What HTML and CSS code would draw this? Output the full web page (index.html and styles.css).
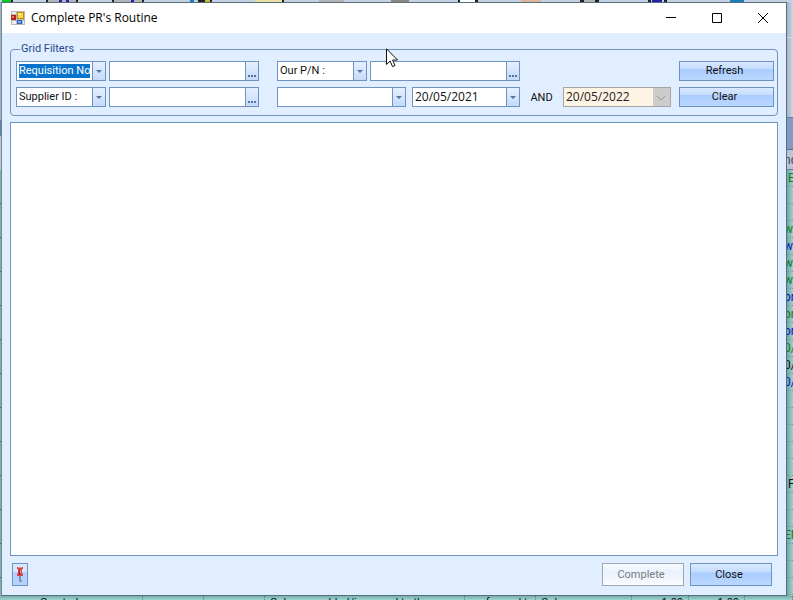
FILE: index.html
```html
<!DOCTYPE html>
<html lang="en">
<head>
<meta charset="utf-8">
<title>Complete PR's Routine</title>
<link rel="stylesheet" href="styles.css">
</head>
<body>
<div class="desktop">
  <div class="strip-top" aria-hidden="true">
    <svg width="793" height="2" viewBox="0 0 793 2"><path fill="#0c2" d="M2 0h9v2H2z"/><path fill="#222" d="M11 0h2v2h-2zM46 0h2v2h-2zM76 0h2v2h-2zM112 0h2v2h-2zM142 0h2v2h-2zM198 0h14v2h-14zM282 0h2v2h-2zM458 0h2v2h-2zM475 0h3v2h-3zM580 0h4v2h-4zM595 0h4v2h-4zM648 0h3v2h-3zM664 0h3v2h-3z"/><path fill="#b4b4b4" d="M48 0h28v2H48zM114 0h28v2h-28zM319 0h25v2h-25zM584 0h11v2h-11z"/><path fill="#fff" d="M460 0h15v2h-15z"/><path fill="#22a" d="M59 0h3v2h-3zM66 0h3v2h-3zM131 0h3v2h-3zM652 0h10v2h-10z"/><path fill="#1780bb" d="M190 0h4v2h-4zM730 0h14v2h-14z"/><path fill="#c9b93b" d="M205 0h5v2h-5z"/><path fill="#e8e0a0" d="M255 0h27v2h-27z"/><path fill="#888" d="M391 0h18v2h-18z"/><path fill="#d9b69c" d="M521 0h20v2h-20z"/></svg>
  </div>
  <div class="strip-left" aria-hidden="true"><div class="left-bars"></div><div class="left-rows"></div></div>
  <main class="window">
    <header class="titlebar">
      <svg class="app-icon" width="14" height="14" viewBox="0 0 14 14"><path fill="#b9b9b9" d="M0 0h14v14H0z"/><path fill="#eee" d="M1 1h4v2H1zM1 10h4v3H1zM12 10h1v3h-1z"/><path fill="#b3261b" d="M0 4h5v5H0z"/><path fill="#ef7a68" d="M1 5h2v2H1z"/><path fill="#c78a00" d="M6 1h7v7H6z"/><path fill="#ffd84d" d="M7 2h5v5H7z"/><path fill="#fff0a0" d="M7 2h3v2H7z"/><path fill="#2f63bd" d="M6 9h5v4H6z"/><path fill="#82a9ee" d="M7 10h3v2H7z"/></svg>
      <h1>Complete PR's Routine</h1>
      <div class="caption-buttons">
        <button type="button" aria-label="Minimize"><svg width="12" height="12"><path d="M1 5.500h10"/></svg></button>
        <button type="button" aria-label="Maximize"><svg width="12" height="12"><path d="M1.500 1.500h9v9h-9z"/></svg></button>
        <button type="button" aria-label="Close window"><svg width="12" height="12"><path d="M1 1l10 10M11 1L1 11"/></svg></button>
      </div>
    </header>
    <fieldset class="filters">
      <legend>Grid Filters</legend>
      <div class="filter-line">
        <div class="combo type"><select aria-label="First filter" class="selected"><option>Requisition No</option></select></div>
        <div class="lookup"><input type="text" aria-label="Requisition value"><button type="button" aria-label="Find requisition"><i></i><i></i><i></i></button></div>
        <div class="combo type second"><select aria-label="Second filter"><option>Our P/N :</option></select></div>
        <div class="lookup"><input type="text" aria-label="Part number value"><button type="button" aria-label="Find part"><i></i><i></i><i></i></button></div>
        <button type="button" class="button action">Refresh</button>
      </div>
      <div class="filter-line">
        <div class="combo type"><select aria-label="Third filter"><option>Supplier ID :</option></select></div>
        <div class="lookup"><input type="text" aria-label="Supplier value"><button type="button" aria-label="Find supplier"><i></i><i></i><i></i></button></div>
        <div class="combo field second"><select aria-label="Date field"><option></option></select></div>
        <div class="combo date"><select aria-label="From date"><option>20/05/2021</option></select></div>
        <span class="and">AND</span>
        <div class="combo date off"><select aria-label="To date" disabled><option>20/05/2022</option></select><svg width="10" height="6"><path d="M1 1l4 4 4-4"/></svg></div>
        <button type="button" class="button action">Clear</button>
      </div>
    </fieldset>
    <section class="results" aria-label="Results"></section>
    <footer class="footer">
      <button type="button" class="pin" aria-label="Pin window"><svg width="8" height="16" viewBox="0 0 8 16"><path fill="#8291a5" d="M3 9h2v5H3z"/><path fill="#8b98b1" d="M3 13h3v2H3z"/><path fill="#d94747" d="M1 0h6v2H6v4l1 1v2H1V7l1-1V2H1z"/><path fill="#f19090" d="M2 0h4v1H2zM4 3h1v3H4z"/><path fill="#9f2029" d="M3 3h1v5H3z"/></svg></button>
      <button type="button" class="button" disabled>Complete</button>
      <button type="button" class="button">Close</button>
    </footer>
  </main>
  <div class="strip-right" aria-hidden="true">
    <div class="r-tool"></div><div class="r-space"></div><div class="r-band"></div><div class="r-head">nc</div>
    <div class="r-row green full">E</div><div class="r-row"></div><div class="r-row"></div>
    <div class="r-row green">w</div><div class="r-row blue">w</div><div class="r-row green">w</div><div class="r-row green">w</div>
    <div class="r-row blue">or</div><div class="r-row green">or</div><div class="r-row blue">or</div>
    <div class="r-row green">0/</div><div class="r-row">0/</div><div class="r-row blue">0/</div>
    <div class="r-row"></div><div class="r-row"></div><div class="r-row"></div><div class="r-row"></div><div class="r-row"></div>
    <div class="r-row full">F</div><div class="r-row"></div><div class="r-row"></div><div class="r-row green">ER</div>
    <div class="r-row"></div><div class="r-row"></div><div class="r-row"></div>
  </div>
  <div class="strip-bottom" aria-hidden="true">
    <span>Created</span><span></span><span></span><span>Column enabled/is moved to the e</span><span>performed to</span><span>Column</span><span class="num">1.00</span><span class="num">1.00</span><span></span>
  </div>
  <svg class="cursor" width="12" height="20" viewBox="0 0 12 20" aria-hidden="true"><path fill="#fff" stroke="#111" d="M.5.800v15.700l3.600-3.500 2.400 5.600 2.500-1.100-2.400-5.500h4.900z"/></svg>
</div>
</body>
</html>
```
FILE: styles.css
```css
* { box-sizing: border-box; }
body {
  margin: 0;
  overflow: hidden;
  color: #111;
  font: 11px/14px Roboto, "Liberation Sans", sans-serif;
}
button, input, select { font: inherit; color: inherit; margin: 0; border-radius: 0; }
.desktop {
  position: relative;
  display: grid;
  grid-template: 2px minmax(0, 1fr) 4px / 1px minmax(0, 1fr) 6px;
  height: 100vh;
  background: #9ad6d3;
}
.strip-top { grid-column: 1 / -1; overflow: hidden; background: #c3d1e3; }
.strip-top svg { display: block; }
.strip-left { display: flex; flex-direction: column; overflow: hidden; }
.left-bars { height: 168px; background: linear-gradient(#9fb0c8 0 70%, #667fae 70% 80%, #c0c8d8 80%); }
.left-rows { flex: 1; background: repeating-linear-gradient(#7fb0ae 0 33px, #486d6e 33px 34px); }
.window {
  display: flex;
  flex-direction: column;
  min-width: 0;
  border: 1px solid #56707e;
  border-left-color: #6b8a93;
  background: #e1eeff;
}
.titlebar { display: flex; flex: none; align-items: center; height: 30px; padding-left: 9px; background: #fff; }
.titlebar h1 { flex: 1; margin: 0 0 0 6px; color: #000; font: 12px/16px "Open Sans", "Noto Sans", sans-serif; }
.caption-buttons { display: flex; }
.caption-buttons button { width: 46px; height: 30px; padding: 0; border: 0; background: none; }
.caption-buttons svg { display: block; margin: auto; fill: none; stroke: #000; }
.filters {
  display: flex;
  flex-direction: column;
  gap: 6px;
  min-width: 0;
  margin: 9px 8px 0;
  padding: 5px 3px 8px 5px;
  border: 1px solid #6f93c1;
  border-radius: 4px;
}
.filters legend { margin-left: 4px; padding: 0 6px 0 1px; color: #24498c; line-height: 14px; }
.filter-line { display: flex; height: 20px; }
.combo { position: relative; flex: none; border: 1px solid #6f93c1; background: #fff; }
.combo select {
  appearance: none;
  display: block;
  width: 100%;
  height: 100%;
  padding: 0 14px 0 2px;
  border: 0;
  outline: 0;
  color: #111;
  background: conic-gradient(#6f93c1 0 0) right 12px top / 1px 100% no-repeat, linear-gradient(#e6f0ff, #c5dafa) right / 12px 100% no-repeat;
}
.combo::after {
  content: "";
  position: absolute;
  right: 3px;
  top: 8px;
  border: 3px solid transparent;
  border-top-color: #54749f;
  border-bottom: 0;
}
.combo .selected {
  color: #fff;
  background: conic-gradient(#6f93c1 0 0) right 12px top / 1px 100% no-repeat, linear-gradient(#e6f0ff, #c5dafa) right / 12px 100% no-repeat, conic-gradient(#0874ce 0 0) 2px 2px / 71px 14px no-repeat;
}
.type { width: 90px; }
.lookup { display: flex; flex: none; width: 150px; margin-left: 3px; border: 1px solid #6f93c1; background: #fff; }
.lookup input { flex: 1; min-width: 0; padding: 0 3px; border: 0; outline: 0; background: none; }
.lookup button {
  display: flex;
  align-items: flex-end;
  justify-content: center;
  gap: 1px;
  width: 13px;
  padding: 0 0 3px;
  border: 0;
  border-left: 1px solid #6f93c1;
  background: linear-gradient(#e6f0ff, #c5dafa);
}
.lookup i { width: 2px; height: 2px; background: #54749f; }
.second { margin-left: 18px; }
.field { width: 129px; }
.date { width: 108px; margin-left: 6px; }
.date select { font-family: "Open Sans", "Noto Sans", sans-serif; font-size: 12px; }
.and { width: 43px; padding-top: 4px; text-align: center; }
.off { margin-left: 0; border-color: #a5a5a5; }
.off select { color: #222; opacity: 1; background: linear-gradient(#ccc 0 0) right / 17px 100% no-repeat, #fdf4e4; }
.off::after { content: none; }
.off svg { position: absolute; right: 4px; top: 7px; fill: none; stroke: #999; }
.button {
  width: 82px;
  height: 23px;
  padding: 0 4px 0 0;
  border: 1px solid #6f93c1;
  background: linear-gradient(#d9e8ff 0, #c5dcff 38%, #aacdff 42%, #bbd7ff 100%);
}
.button:disabled { border-color: #a1a7b0; color: #7b7b7b; background: linear-gradient(#f8fbff, #eaf2ff 40%, #fafcff); }
.action { width: 95px; height: 20px; margin-left: auto; }
.results { flex: 1; min-height: 0; margin: 6px 8px 0; border: 1px solid #6f93c1; background: #fff; }
.footer { display: flex; flex: none; gap: 6px; padding: 7px 14px 9px 10px; }
.pin { display: grid; place-items: center; width: 16px; height: 23px; margin-right: auto; padding: 0; border: 1px solid #6f93c1; background: linear-gradient(#d9e8ff 40%, #b5d2ff 40%); }
.strip-right { overflow: hidden; color: #111; background: linear-gradient(to right, #75a5a4, #99d3d1); white-space: nowrap; text-indent: -3px; font-size: 12px; }
.r-tool { height: 36px; background: linear-gradient(to right, #a5b2c5, #cbd7e8); border-bottom: 1px solid #d9dcdd; }
.r-space { height: 79px; background: linear-gradient(to right, #a5b2c5, #cbd7e8); }
.r-band { height: 33px; border-top: 1px solid #5f7da8; border-bottom: 1px solid #536e96; background: #8299c0; }
.r-head { height: 20px; padding-top: 3px; color: #344b70; background: #bac5d3; border-bottom: 1px solid #66838d; }
.r-row { height: 17px; padding-top: 1px; border-bottom: 1px dotted #719b9e; }
.full { text-indent: 1px; }
.green { color: #087f18; }
.blue { color: #0916bd; }
.strip-bottom {
  display: grid;
  grid-column: 1 / -1;
  grid-template-columns: 108px 61px 61px 200px 71px 96px 57px 56px 1fr;
  padding-left: 35px;
  overflow: hidden;
  background: linear-gradient(#7aaeac, #9ad6d3);
  line-height: 12px;
  white-space: nowrap;
}
.strip-bottom span { height: 4px; padding: 1px 5px; border-right: 1px dotted #638b8d; overflow: hidden; }
.strip-bottom .num { text-align: right; }
.cursor { position: absolute; left: 386px; top: 48px; pointer-events: none; }
```
